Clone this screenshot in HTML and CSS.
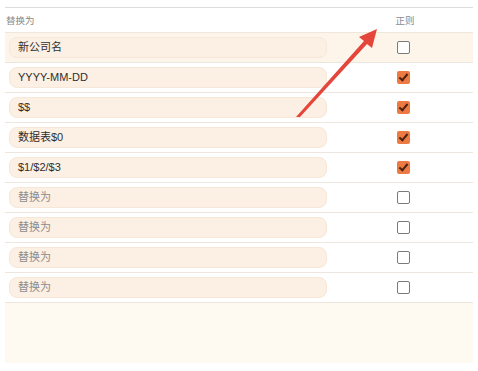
FILE: index.html
```html
<!DOCTYPE html>
<html>
<head>
<meta charset="utf-8">
<link rel="stylesheet" href="styles.css">
</head>
<body>
<div class="panel">
  <div class="head">
    <div class="h-col">替换为</div>
    <div class="h-check">正则</div>
  </div>
  <div class="row hl">
    <div class="cell"><div class="field">新公司名</div></div>
    <div class="check-cell"><span class="box"></span></div>
  </div>
  <div class="row">
    <div class="cell"><div class="field">YYYY-MM-DD</div></div>
    <div class="check-cell"><span class="box on"></span></div>
  </div>
  <div class="row">
    <div class="cell"><div class="field">$$</div></div>
    <div class="check-cell"><span class="box on"></span></div>
  </div>
  <div class="row">
    <div class="cell"><div class="field">数据表$0</div></div>
    <div class="check-cell"><span class="box on"></span></div>
  </div>
  <div class="row">
    <div class="cell"><div class="field">$1/$2/$3</div></div>
    <div class="check-cell"><span class="box on"></span></div>
  </div>
  <div class="row">
    <div class="cell"><div class="field ph">替换为</div></div>
    <div class="check-cell"><span class="box"></span></div>
  </div>
  <div class="row">
    <div class="cell"><div class="field ph">替换为</div></div>
    <div class="check-cell"><span class="box"></span></div>
  </div>
  <div class="row">
    <div class="cell"><div class="field ph">替换为</div></div>
    <div class="check-cell"><span class="box"></span></div>
  </div>
  <div class="row">
    <div class="cell"><div class="field ph">替换为</div></div>
    <div class="check-cell"><span class="box"></span></div>
  </div>
  <div class="filler"></div>
</div>
<svg class="arrow" width="478" height="371" viewBox="0 0 478 371">
  <polygon points="296,117 300,117 367,44 372,48 377,29 359,37 364,41" fill="#e4463b"/>
</svg>
</body>
</html>
```
FILE: styles.css
```css
html, body {
  margin: 0;
  padding: 0;
  background: #ffffff;
}
body {
  font-family: "Liberation Sans", "Noto Sans CJK SC", sans-serif;
  position: relative;
  width: 478px;
  height: 371px;
  overflow: hidden;
}
.panel {
  margin: 7px 0 0 5px;
  width: 468px;
  border-top: 1px solid #dcdcdc;
}
.head {
  display: grid;
  grid-template-columns: 336px 128px 1fr;
  height: 24px;
  align-items: center;
  font-size: 9.5px;
  color: #8a8a8a;
  border-bottom: 1px solid #f1e6da;
}
.h-col {
  padding-left: 1px;
}
.h-check {
  text-align: center;
}
.row {
  display: grid;
  grid-template-columns: 336px 124px 1fr;
  height: 29px;
  align-items: center;
  border-bottom: 1px solid #ece6df;
}
.row.hl {
  background: #fdf4ea;
}
.cell {
  padding-left: 4px;
}
.field {
  width: 308px;
  height: 19px;
  line-height: 19px;
  padding-left: 8px;
  background: #fcf0e4;
  border: 1px solid #f6e7d8;
  border-radius: 8px;
  font-size: 11px;
  color: #2e2e2e;
}
.field.ph {
  color: #8c8c8c;
}
.check-cell {
  display: flex;
  justify-content: center;
}
.box {
  width: 11px;
  height: 11px;
  border: 1px solid #7a7a7a;
  border-radius: 2px;
  background: #fff;
  position: relative;
}
.box.on {
  width: 13px;
  height: 13px;
  border: none;
  background: #ec7a42;
}
.box.on::after {
  content: "";
  position: absolute;
  left: 4px;
  top: 1px;
  width: 3px;
  height: 7px;
  border-right: 2px solid #4a2312;
  border-bottom: 2px solid #4a2312;
  transform: rotate(40deg);
}
.filler {
  height: 60px;
  background: #fef9f1;
}
.arrow {
  position: absolute;
  left: 0;
  top: 0;
  pointer-events: none;
}
```
